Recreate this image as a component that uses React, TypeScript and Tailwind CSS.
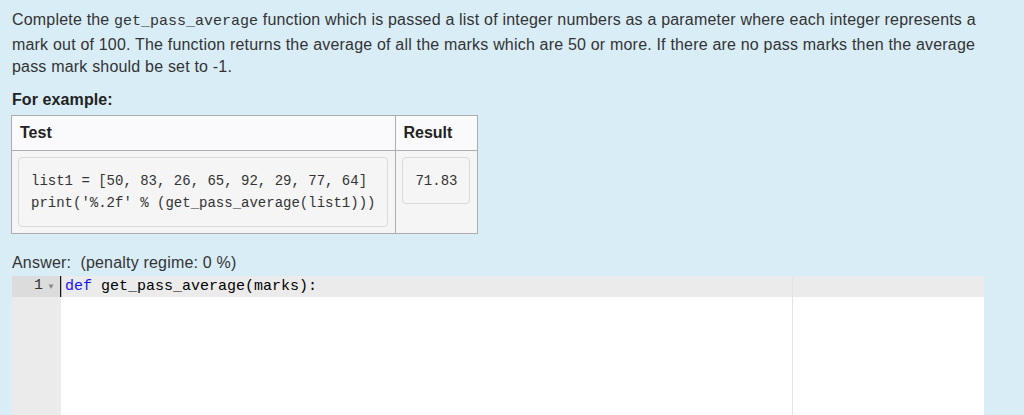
import React from 'react';

// Constants
const MONO = "font-['Liberation_Mono',monospace]";

const TEST_CODE = [
  'list1 = [50, 83, 26, 65, 92, 29, 77, 64]',
  "print('%.2f' % (get_pass_average(list1)))",
];

function ExampleTable() {
  return (
    <table className="mt-[4px] -ml-px border-collapse border border-[#adadad]">
      <thead>
        <tr className="bg-[#fafafd]">
          <th className="h-[35px] border border-[#adadad] px-[8px] text-left align-middle text-[16px] font-bold text-[#222]">
            Test
          </th>
          <th className="h-[35px] border border-[#adadad] px-[7px] text-left align-middle text-[16px] font-bold text-[#222]">
            Result
          </th>
        </tr>
      </thead>
      <tbody>
        <tr className="bg-[#f5f5f5]">
          <td className="border border-[#adadad] p-[6px] pr-[7px] align-top">
            <pre
              className={`${MONO} rounded-[4px] border border-[#dadada] bg-[#f5f5f5] px-[12px] py-[11.5px] text-[14px] leading-[22.4px] text-[#333]`}
            >
              {TEST_CODE.join('\n')}
            </pre>
          </td>
          <td className="border border-[#adadad] p-[6px] pr-[7px] align-top">
            <pre
              className={`${MONO} rounded-[4px] border border-[#dadada] bg-[#f5f5f5] px-[12px] py-[11.5px] text-[14px] leading-[22.4px] text-[#333]`}
            >
              71.83
            </pre>
          </td>
        </tr>
      </tbody>
    </table>
  );
}

function AnswerEditor() {
  return (
    <div className="mt-[1.5px] flex h-[200px] w-[972px]">
      {/* Gutter */}
      <div className="w-[49px] shrink-0 bg-[#ebebeb]">
        <div className="flex h-[21px] items-center justify-end bg-[#dcdcdc] pr-[6px] text-[15px] text-[#333]">
          <span className={`${MONO}`}>1</span>
          <span className="ml-[4px] mt-[2px] text-[8px] text-[#888]">▼</span>
        </div>
      </div>

      {/* Content */}
      <div className="relative flex-1 bg-white">
        <div className={`${MONO} h-[21px] bg-[#ebebeb] pl-[4px] text-[15px] leading-[21px] text-black`}>
          <span className="text-[#1515ff]">def</span> get_pass_average(marks):
        </div>
        {/* cursor */}
        <div className="absolute -left-px top-0 h-[21px] w-px bg-[#111]" />
        <div className="absolute left-0 top-0 h-[21px] w-px bg-[#b9b9b9]" />
        {/* print margin */}
        <div className="absolute left-[731px] top-0 h-full w-px bg-[#e3e3e3]" />
      </div>
    </div>
  );
}

export default function App() {
  return (
    <div className="min-h-screen overflow-hidden bg-[#d9edf7] px-[12px] pt-[9px] font-['Liberation_Sans',Arial,sans-serif] text-[#333]">
      <p className="w-[1000px] text-[16px] leading-[22.5px] tracking-[0.19px]">
        Complete the <code className={`${MONO} text-[15px] tracking-normal`}>get_pass_average</code> function which is
        passed a list of integer numbers as a parameter where each integer represents a
        <br />
        mark out of 100. The function returns the average of all the marks which are 50 or more. If there are no pass
        marks then the average
        <br />
        pass mark should be set to -1.
      </p>
      <h4 className="mt-[10px] text-[16px] font-bold leading-[22.5px] tracking-[0.1px] text-[#222]">For example:</h4>

      <ExampleTable />

      <div className="mt-[18px] text-[16px] leading-[22.5px] tracking-[0.19px]">Answer:&nbsp; (penalty regime: 0 %)</div>

      <AnswerEditor />
    </div>
  );
}
